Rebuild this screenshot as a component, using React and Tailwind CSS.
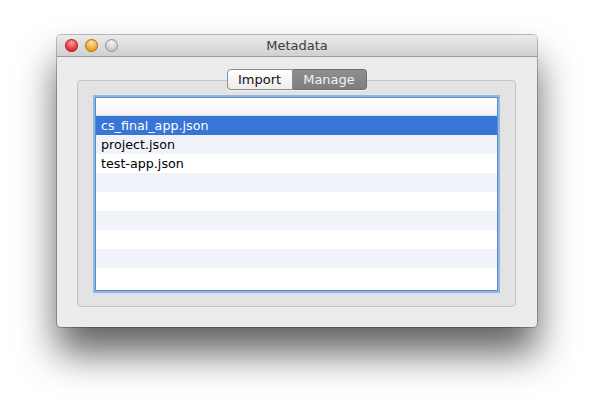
const files = ["cs_final_app.json", "project.json", "test-app.json"];

function TrafficLight({ from, to, border }) {
  return (
    <div
      className="w-[13px] h-[13px] rounded-full"
      style={{
        background: `radial-gradient(circle at 50% 30%, ${from} 0%, ${to} 70%)`,
        boxShadow: `inset 0 0 0 1px ${border}`,
      }}
    />
  );
}

export default function App() {
  const rows = Array.from({ length: 9 });
  return (
    <div className="w-[594px] h-[406px] bg-white pl-[57px] pt-[35px] font-['DejaVu_Sans',sans-serif]">
      <div className="w-[480px] h-[292px] flex flex-col rounded-[4px] bg-[#ececec] shadow-[0_26px_38px_rgba(0,0,0,0.62),0_0_0_1px_rgba(0,0,0,0.25)] overflow-hidden">
        {/* title bar */}
        <div className="h-[22px] relative flex items-center bg-gradient-to-b from-[#ebebeb] to-[#d0d0d0] border-b border-[#9a9a9a]">
          <div className="flex gap-[7px] pl-[8px] items-center">
            <TrafficLight from="#ff9a9a" to="#d8262b" border="#b0343a" />
            <TrafficLight from="#ffe3a0" to="#e39a1c" border="#b57a20" />
            <TrafficLight from="#f6f6f6" to="#c2c2c2" border="#9a9a9a" />
          </div>
          <div className="absolute inset-0 flex items-center justify-center text-[13px] text-[#3d3d3d]">
            Metadata
          </div>
        </div>

        {/* body */}
        <div className="flex-1 pt-[23px] px-[20px] pb-[20px] pr-[21px]">
          <div className="relative h-full rounded-[4px] bg-[#e3e3e3] border border-[#c4c4c4] pt-[16px] px-[17px] pb-[15px]">
            {/* segmented control */}
            <div className="absolute -top-[12px] left-0 right-0 flex justify-center">
              <div className="flex h-[21px] text-[13px] rounded-[4px] shadow-[0_1px_0_rgba(255,255,255,0.6)]">
                <div className="w-[66px] flex items-center justify-center rounded-l-[4px] border border-[#8c8c8c] bg-gradient-to-b from-white to-[#ececec] text-[#111]">
                  Import
                </div>
                <div className="w-[74px] flex items-center justify-center rounded-r-[4px] border border-l-0 border-[#6f6f6f] bg-gradient-to-b from-[#8e8e8e] to-[#7e7e7e] text-[#f2f2f2]">
                  Manage
                </div>
              </div>
            </div>

            {/* list */}
            <div className="h-full border border-[#5a8cc8] shadow-[0_0_0_2px_#92b7e3] bg-white overflow-hidden text-[12.7px] text-black">
              <div className="h-[18px] bg-gradient-to-b from-white to-[#f4f4f4] border-b border-[#e2e2e2]" />
              {rows.map((_, i) => {
                const name = files[i];
                const selected = i === 0;
                const bg = selected ? "bg-[#3875d7] text-white" : i % 2 === 1 ? "bg-[#f0f4fa]" : "bg-white";
                return (
                  <div key={i} className={`h-[19px] flex items-center pl-[5px] pt-[1px] ${bg}`}>
                    {name}
                  </div>
                );
              })}
            </div>
          </div>
        </div>
      </div>
    </div>
  );
}
